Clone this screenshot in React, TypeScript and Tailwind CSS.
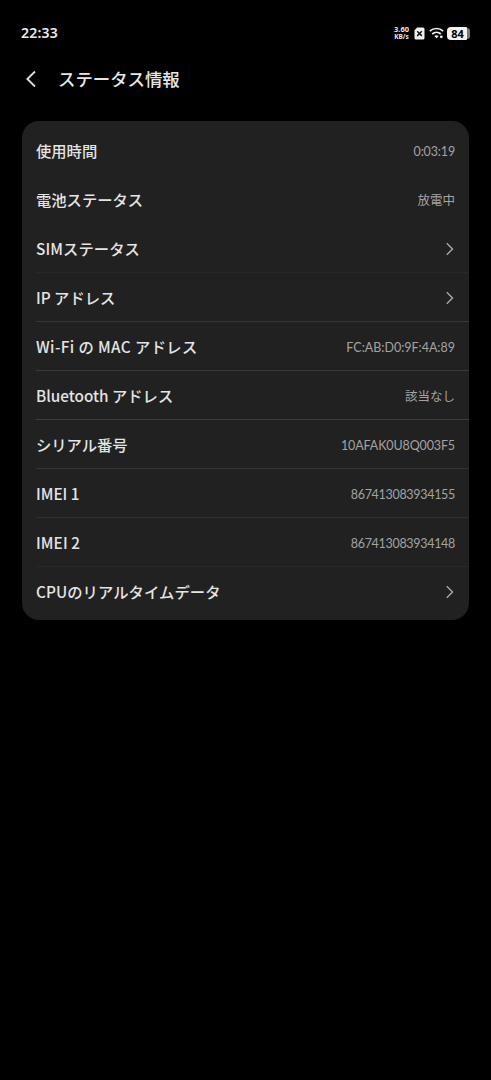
import React from 'react';

interface StatusRow {
  label: string;
  labelClass?: string;
  value?: string;
  valueClass?: string;
  divider?: string;
}

const ROWS: StatusRow[] = [
  { label: '使用時間', value: '0:03:19', valueClass: 'tracking-[-0.15px]' },
  { label: '電池ステータス', value: '放電中' },
  { label: 'SIMステータス', labelClass: 'tracking-[0.1px]', divider: 'bg-[#282828]' },
  { label: 'IP アドレス', divider: 'bg-[#363636]' },
  { label: 'Wi-Fi の MAC アドレス', labelClass: 'tracking-[0.4px]', value: 'FC:AB:D0:9F:4A:89', divider: 'bg-[#3a3a3a]' },
  { label: 'Bluetooth アドレス', value: '該当なし', divider: 'bg-[#3c3c3c]' },
  { label: 'シリアル番号', value: '10AFAK0U8Q003F5', valueClass: 'tracking-[-0.12px]', divider: 'bg-[#363636]' },
  { label: 'IMEI 1', value: '867413083934155', valueClass: 'tracking-[-0.3px]', divider: 'bg-[#303030]' },
  { label: 'IMEI 2', labelClass: 'tracking-[0.1px]', value: '867413083934148', valueClass: 'tracking-[-0.3px]', divider: 'bg-[#282828]' },
  { label: 'CPUのリアルタイムデータ', labelClass: 'tracking-[0.08px]' },
];

const StatusBar: React.FC = () => (
  <div className="flex h-[66px] items-center justify-between pl-[21px] pr-[21px]">
    <span className="font-['Noto_Sans',sans-serif] text-[14px] font-semibold leading-none tracking-[0.2px] text-[#ececec]">22:33</span>
    <div className="flex items-center">
      <div className="flex w-[17px] flex-col items-center font-['Noto_Sans',sans-serif] font-bold text-[#e8e8e8]">
        <span className="text-[7.5px] leading-[8px]">3.60</span>
        <span className="text-[6.5px] leading-[8px]">KB/s</span>
      </div>
      {/* No SIM */}
      <svg className="ml-[4px] h-[13px] w-[11px]" viewBox="0 0 11 13">
        <path d="M3.2 0.5H9a1.5 1.5 0 0 1 1.5 1.5v9A1.5 1.5 0 0 1 9 12.5H2A1.5 1.5 0 0 1 .5 11V3.2z" fill="#f0f0f0" />
        <path d="M3.2 4.3l4.6 4.6m0-4.6l-4.6 4.6" stroke="#111" strokeWidth="1.5" />
      </svg>
      {/* Wi-Fi */}
      <svg className="ml-[4px] h-[12px] w-[15px]" viewBox="0 0 15 12" fill="none" stroke="#f0f0f0">
        <path d="M.8 4.2C4.6.6 10.4.6 14.2 4.2" strokeWidth="1.7" />
        <path d="M3.2 7c2.5-2.3 6.1-2.3 8.6 0" strokeWidth="1.7" />
        <path d="M5.3 9c1.3-1.1 3.1-1.1 4.4 0L7.5 11.3z" fill="#f0f0f0" stroke="none" />
        <circle cx="12.3" cy="9.8" r="1.4" fill="#f0f0f0" stroke="none" />
      </svg>
      {/* Battery */}
      <div className="ml-[3px] flex items-center">
        <div className="flex h-[13px] w-[20px] items-center justify-center rounded-l-[4px] rounded-r-[1px] bg-[#f2f2f2] pl-px font-['Noto_Sans',sans-serif] text-[11px] font-bold leading-none text-black">84</div>
        <div className="h-[11px] w-[3px] rounded-r-[3px] bg-[#777]" />
      </div>
    </div>
  </div>
);

const Chevron: React.FC = () => (
  <svg className="mt-[2px] h-[14px] w-[10px]" viewBox="0 0 10 14" fill="none" stroke="#a8a8a8" strokeWidth="1.4">
    <path d="M1.8 1.3L7.5 7L1.8 12.7" />
  </svg>
);

export default function App() {
  return (
    <div className="min-h-screen bg-black font-['Noto_Sans_CJK_JP',sans-serif]" lang="ja">
      <StatusBar />
      <header className="flex h-[26px] items-center pl-[25px]">
        <svg className="h-[18px] w-[12px]" viewBox="0 0 12 18" fill="none" stroke="#e0e0e0" strokeWidth="1.8">
          <path d="M10 1.5L2.3 9L10 16.5" />
        </svg>
        <h1 className="ml-[21px] text-[17.4px] font-medium leading-none text-[#e6e6e6]">ステータス情報</h1>
      </header>

      <main className="mx-[22px] mt-[29px] rounded-[17px] bg-[#212121] pb-[4px] pt-[5px]">
        {ROWS.map((row) => (
          <div key={row.label} className="flex h-[49px] flex-col pl-[14px]">
            <div className="flex flex-1 items-center justify-between pr-[14px]">
              <span className={`whitespace-pre pt-[2px] text-[15.3px] font-medium leading-none text-[#e4e4e4] ${row.labelClass ?? ''}`}>{row.label}</span>
              {row.value ? (
                <span className={`pt-[4px] font-['Lato','Noto_Sans_CJK_JP',sans-serif] text-[12.5px] leading-none text-[#a3a3a3] ${row.valueClass ?? ''}`}>{row.value}</span>
              ) : (
                <Chevron />
              )}
            </div>
            <div className={`h-px ${row.divider ?? 'bg-transparent'}`} />
          </div>
        ))}
      </main>
    </div>
  );
}
